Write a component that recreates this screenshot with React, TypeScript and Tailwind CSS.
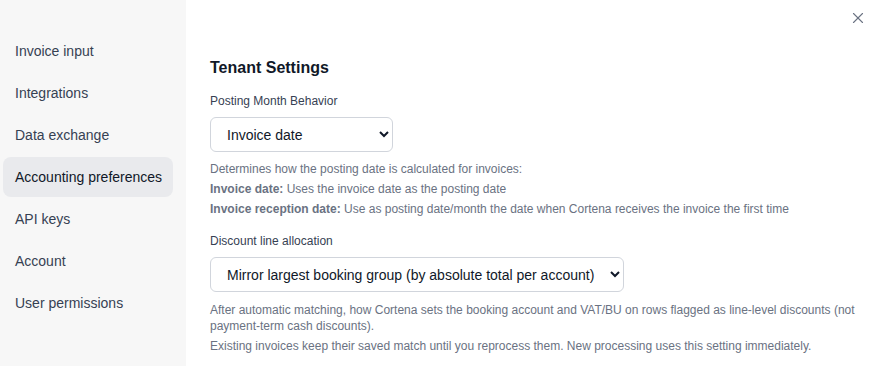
import { X } from 'lucide-react';

const navItems = [
    'Invoice input',
    'Integrations',
    'Data exchange',
    'Accounting preferences',
    'API keys',
    'Account',
    'User permissions',
];

const App = () => {
    const active = 'Accounting preferences';

    return (
        <div className="flex h-[366px] w-[883px] bg-white font-['Liberation_Sans',Arial,sans-serif] text-gray-900">
            <aside className="w-[186px] shrink-0 bg-[#f7f7f7] pl-[3px] pr-[13px] pt-[31px]">
                <nav className="flex flex-col gap-[2px]">
                    {navItems.map(item => (
                        <div
                            key={item}
                            className={`flex h-10 items-center whitespace-nowrap rounded-lg px-3 text-[14px] ${item === active ? 'bg-[#e9eaed] text-gray-900' : 'text-gray-700'}`}
                        >
                            {item}
                        </div>
                    ))}
                </nav>
            </aside>

            <main className="relative flex-1 pl-6 pt-[58px]">
                <button className="absolute right-[16px] top-[9px] text-gray-500">
                    <X className="h-[18px] w-[18px]" strokeWidth={1.5} />
                </button>

                <h2 className="text-[16px] font-bold leading-5 text-gray-900">Tenant Settings</h2>

                <section className="mt-[15px]">
                    <label className="block text-[12px] leading-4 text-gray-700">Posting Month Behavior</label>
                    <select className="mt-[8px] h-[35px] w-[183px] rounded-md border border-gray-300 bg-white px-3 text-[14px] text-gray-900">
                        <option>Invoice date</option>
                        <option>Invoice reception date</option>
                    </select>
                    <div className="mt-[9px] space-y-[4px] text-[12px] leading-4 text-gray-500">
                        <p>Determines how the posting date is calculated for invoices:</p>
                        <p><span className="font-bold">Invoice date:</span> Uses the invoice date as the posting date</p>
                        <p><span className="font-bold">Invoice reception date:</span> Use as posting date/month the date when Cortena receives the invoice the first time</p>
                    </div>
                </section>

                <section className="mt-[16px]">
                    <label className="block text-[12px] leading-4 text-gray-700">Discount line allocation</label>
                    <select className="mt-[8px] h-[35px] w-[414px] rounded-md border border-gray-300 bg-white px-3 text-[14px] text-gray-900">
                        <option>Mirror largest booking group (by absolute total per account)</option>
                    </select>
                    <div className="mt-[10px] space-y-[4px] pr-6 text-[12px] leading-4 text-gray-500">
                        <p>After automatic matching, how Cortena sets the booking account and VAT/BU on rows flagged as line-level discounts (not payment-term cash discounts).</p>
                        <p>Existing invoices keep their saved match until you reprocess them. New processing uses this setting immediately.</p>
                    </div>
                </section>
            </main>
        </div>
    );
};

export default App;
